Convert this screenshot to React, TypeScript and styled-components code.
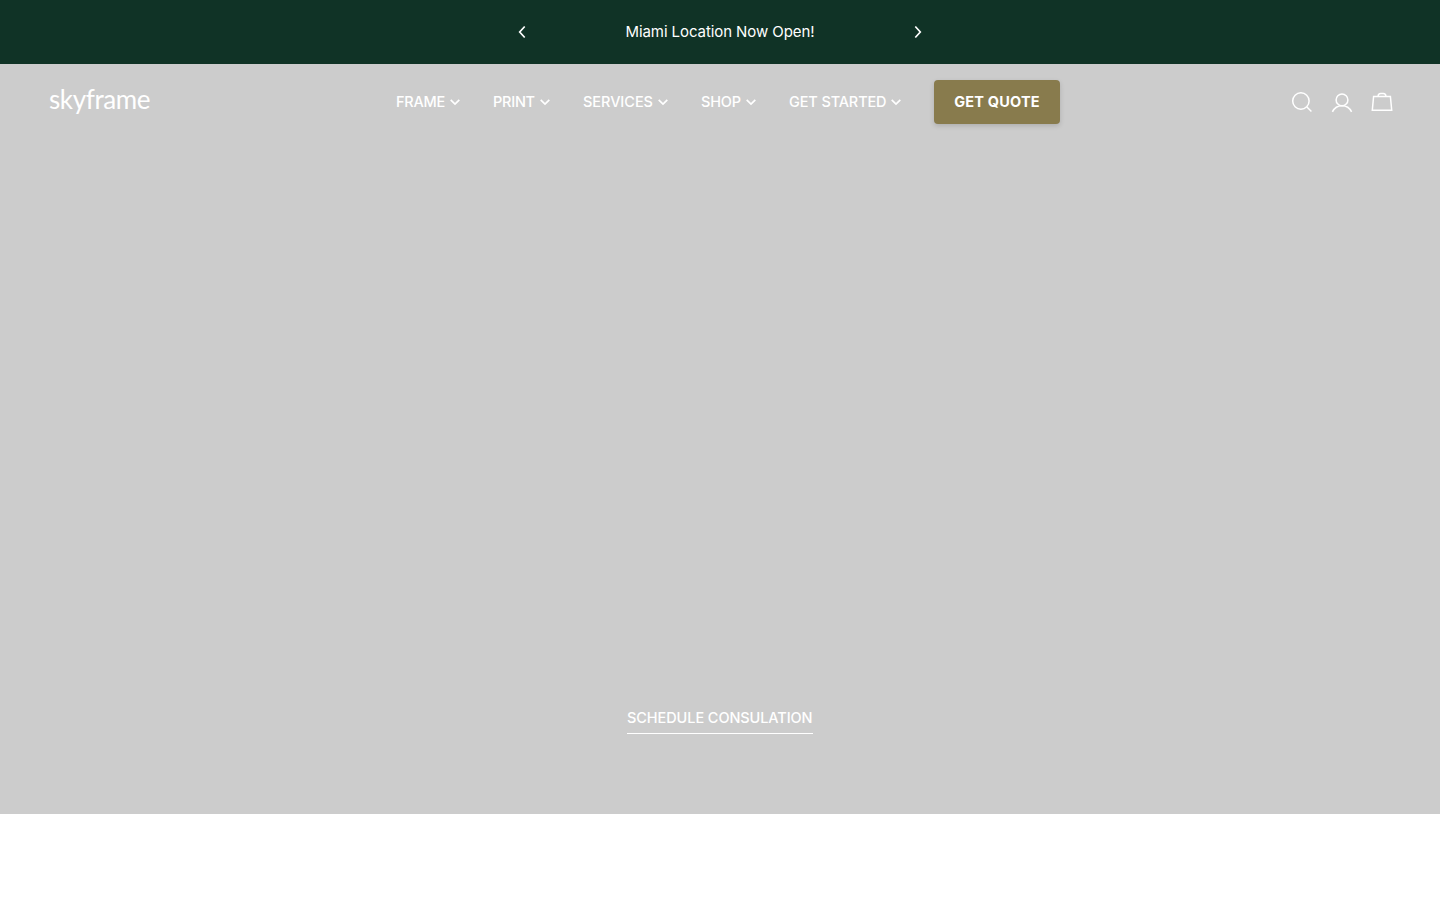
import React from "react";
import styled, { createGlobalStyle } from "styled-components";

const GlobalStyle = createGlobalStyle`
  *, *::before, *::after { box-sizing: border-box; }
  body {
    margin: 0;
    background: #fff;
    color: #fff;
    font-family: Inter, "Liberation Sans", sans-serif;
    overflow: hidden;
  }
  button { background: none; border: 0; padding: 0; color: inherit; font: inherit; cursor: pointer; }
  a { color: inherit; text-decoration: none; }
  svg { display: block; fill: none; stroke: currentColor; }
`;

const AnnouncementBar = styled.div`
  height: 64px;
  display: flex;
  justify-content: center;
  align-items: center;
  background: #103326;
`;

const Slider = styled.div`
  width: 404px;
  display: flex;
  justify-content: space-between;
  align-items: center;
`;

const Message = styled.p`
  margin: 0;
  font-size: 15px;
  line-height: 24px;
  letter-spacing: -0.08px;
  white-space: nowrap;
`;

const Hero = styled.main`
  height: 750px;
  display: flex;
  flex-direction: column;
  justify-content: space-between;
  background: #cccccc;
`;

const Header = styled.header`
  height: 76px;
  padding: 0 47px 0 49px;
  display: grid;
  grid-template-columns: 347px 1fr auto;
  align-items: center;
`;

const Logo = styled.a`
  padding-bottom: 7px;
  font-family: Lato, sans-serif;
  font-size: 26px;
  line-height: 32px;
  letter-spacing: -0.4px;
`;

const Nav = styled.nav`
  display: flex;
  align-items: center;
  gap: 33px;
`;

const NavLink = styled.a`
  display: flex;
  align-items: center;
  gap: 5px;
  font-size: 14.5px;
  font-weight: 500;
  line-height: 24px;
`;

const NavLabel = styled.span<{ $width: number; $tracking: number }>`
  width: ${(p) => p.$width}px;
  letter-spacing: ${(p) => p.$tracking}px;
  white-space: nowrap;
`;

const QuoteButton = styled.a`
  width: 126px;
  height: 44px;
  padding-bottom: 1px;
  display: flex;
  justify-content: center;
  align-items: center;
  border-radius: 4px;
  background: #887b4d;
  box-shadow: 0 2px 5px rgba(0, 0, 0, 0.15);
  font-size: 14.5px;
  font-weight: 700;
  letter-spacing: 0.2px;
  white-space: nowrap;
`;

const Actions = styled.div`
  display: flex;
  gap: 18px;
`;

const HeroFooter = styled.div`
  display: flex;
  justify-content: center;
  padding-bottom: 80px;
`;

const ConsultationLink = styled.a`
  width: 186px;
  height: 28px;
  border-bottom: 1px solid #fff;
  font-size: 14.5px;
  font-weight: 500;
  line-height: 24px;
  letter-spacing: -0.08px;
  white-space: nowrap;
`;

const menu = [
  { label: "FRAME", width: 49, tracking: -0.25 },
  { label: "PRINT", width: 42, tracking: -0.25 },
  { label: "SERVICES", width: 70, tracking: -0.04 },
  { label: "SHOP", width: 40, tracking: -0.2 },
  { label: "GET STARTED", width: 97, tracking: -0.13 },
];

const Arrow = ({ direction }: { direction: "left" | "right" }) => (
  <svg width="8" height="14" viewBox="0 0 8 14" strokeWidth="1.7">
    <path d={direction === "left" ? "M6.7 1.5 1.7 7l5 5.5" : "M1.3 1.5 6.3 7l-5 5.5"} />
  </svg>
);

const Chevron = () => (
  <svg width="10" height="8" viewBox="0 0 10 8" strokeWidth="1.7">
    <path d="M.7 1.8 5 6l4.3-4.2" />
  </svg>
);

const SearchIcon = () => (
  <svg width="22" height="22" viewBox="0 0 22 22" strokeWidth="1.5">
    <circle cx="9.9" cy="10" r="8.2" />
    <path d="m15.7 15.8 4.7 4.7" />
  </svg>
);

const AccountIcon = () => (
  <svg width="22" height="22" viewBox="0 0 22 22" strokeWidth="1.5">
    <circle cx="11" cy="8.9" r="5.9" />
    <path d="M1.4 20.8C3.2 17.2 6.7 14.8 11 14.8s7.8 2.4 9.6 6" />
  </svg>
);

const BagIcon = () => (
  <svg width="22" height="22" viewBox="0 0 22 22" strokeWidth="1.5">
    <path d="M2.6 5.4h16.8l1.3 13.9H1.3L2.6 5.4ZM7.1 5.2C7.1 3.4 8.2 2.4 9.7 2.4h2.6c1.5 0 2.6 1 2.6 2.8" />
  </svg>
);

export default function App() {
  return (
    <>
      <GlobalStyle />
      <AnnouncementBar>
        <Slider>
          <button aria-label="Previous announcement"><Arrow direction="left" /></button>
          <Message>Miami Location Now Open!</Message>
          <button aria-label="Next announcement"><Arrow direction="right" /></button>
        </Slider>
      </AnnouncementBar>
      <Hero>
        <Header>
          <Logo href="#">skyframe</Logo>
          <Nav>
            {menu.map((item) => (
              <NavLink href="#" key={item.label}>
                <NavLabel $width={item.width} $tracking={item.tracking}>{item.label}</NavLabel>
                <Chevron />
              </NavLink>
            ))}
            <QuoteButton href="#">GET QUOTE</QuoteButton>
          </Nav>
          <Actions>
            <button aria-label="Search"><SearchIcon /></button>
            <button aria-label="Account"><AccountIcon /></button>
            <button aria-label="Cart"><BagIcon /></button>
          </Actions>
        </Header>
        <HeroFooter>
          <ConsultationLink href="#">SCHEDULE CONSULATION</ConsultationLink>
        </HeroFooter>
      </Hero>
    </>
  );
}
